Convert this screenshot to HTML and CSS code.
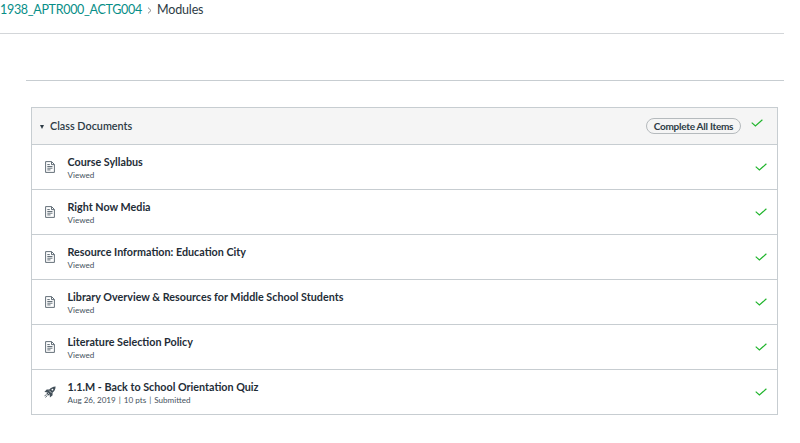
FILE: index.html
```html
<!DOCTYPE html>
<html lang="en">
<head>
<meta charset="utf-8">
<title>Modules</title>
<link rel="stylesheet" href="styles.css">
</head>
<body>
<svg class="defs" width="0" height="0">
  <symbol id="page" viewBox="0 0 10 12"><path d="M.6.6H6.6L9.4 3.4V11.4H.6ZM6.5.8V3.6H9.2M2.3 3.6H4.8M2.3 5.5H7.5M2.3 7.2H7.5M2.3 8.9H5.5" fill="none" stroke="currentColor" stroke-width=".9"/></symbol>
  <symbol id="rocket" viewBox="0 0 12 12"><path d="M11.6.4C8.7.5 6.9 1.6 5.3 3.5L2.7 3.4.4 6.1 3 6.2 2.5 7.4 4.6 9.5 5.8 9 5.9 11.6 8.6 9.3 8.5 6.7C10.4 5.1 11.5 3.3 11.6.4Z" fill="currentColor"/><circle cx="8.4" cy="3.6" r=".9" fill="#fff"/><path d="M3.6 6.5 5.5 8.4M5.2 4.6 7.4 6.8" stroke="#fff" stroke-width=".7"/><path d="M2.4 8.3.5 10.2M3.5 9.3 1.4 11.4" stroke="currentColor" stroke-width=".9"/></symbol>
  <symbol id="check" viewBox="0 0 12 8"><path d="M.7 3.6 4.4 7 11.4.7" fill="none" stroke="currentColor" stroke-width="1.15"/></symbol>
</svg>
<nav class="crumbs"><a class="course">1938_APTR000_ACTG004</a><svg class="sep" viewBox="0 0 5 7"><path d="M1 .6 4 3.5 1 6.4" fill="none" stroke="currentColor"/></svg><span class="current">Modules</span></nav>
<div class="toolbar"></div>
<main class="module">
  <header class="head"><span class="arrow"></span><h2>Class Documents</h2><span class="pill">Complete All Items</span><svg class="check"><use href="#check"/></svg></header>
  <div class="row"><svg class="page"><use href="#page"/></svg><div class="text"><h3>Course Syllabus</h3><p>Viewed</p></div><svg class="check"><use href="#check"/></svg></div>
  <div class="row"><svg class="page"><use href="#page"/></svg><div class="text"><h3>Right Now Media</h3><p>Viewed</p></div><svg class="check"><use href="#check"/></svg></div>
  <div class="row"><svg class="page"><use href="#page"/></svg><div class="text"><h3>Resource Information: Education City</h3><p>Viewed</p></div><svg class="check"><use href="#check"/></svg></div>
  <div class="row"><svg class="page"><use href="#page"/></svg><div class="text"><h3>Library Overview &amp; Resources for Middle School Students</h3><p>Viewed</p></div><svg class="check"><use href="#check"/></svg></div>
  <div class="row"><svg class="page"><use href="#page"/></svg><div class="text"><h3>Literature Selection Policy</h3><p>Viewed</p></div><svg class="check"><use href="#check"/></svg></div>
  <div class="row"><svg class="rocket"><use href="#rocket"/></svg><div class="text"><h3>1.1.M - Back to School Orientation Quiz</h3><p class="meta"><span>Aug 26, 2019</span><i>|</i><span>10 pts</span><i>|</i><span>Submitted</span></p></div><svg class="check"><use href="#check"/></svg></div>
</main>
</body>
</html>
```
FILE: styles.css
```css
* { box-sizing: border-box; }
body { margin: 0; background: #fff; color: #2d3b45; font-family: Lato, sans-serif; overflow: hidden; }
h2, h3, p { margin: 0; }
svg { flex: none; }
.defs { display: block; height: 0; }
.crumbs { display: flex; align-items: center; width: 784px; height: 34px; padding-bottom: 14px; border-bottom: 1px solid #d3d6d9; font-size: 12.5px; line-height: 19px; }
.course { width: 141px; color: #078e87; letter-spacing: -.3px; white-space: nowrap; }
.current { letter-spacing: -.15px; }
.sep { width: 5px; height: 7px; margin: 2px 5px 0 6px; color: #888; }
.toolbar { width: 758px; height: 47px; margin-left: 26px; border-bottom: 1px solid #c7cdd1; }
.module { width: 747px; margin: 26px 0 0 31px; border: 1px solid #c7cdd1; border-bottom: 0; }
.head { display: flex; align-items: center; height: 37px; padding: 0 14px 0 7px; background: #f5f5f5; border-bottom: 1px solid #c7cdd1; }
.arrow { width: 0; height: 0; margin: 2px 0 0 1px; border: 2.5px solid transparent; border-top: 4px solid #2d3b45; border-bottom: 0; }
.head h2 { flex: 1; margin-left: 6px; font-size: 10.8px; line-height: 16px; font-weight: 600; }
.pill { width: 95px; height: 16px; border: 1px solid #b5babd; border-radius: 8px; font-size: 10px; letter-spacing: -.26px; line-height: 15px; font-weight: 700; text-align: center; white-space: nowrap; }
.check { width: 12px; height: 8px; color: #20b52c; }
.head .check { margin: 0 0 6px 10px; }
.row { display: flex; align-items: center; height: 45px; padding: 0 10px 0 12.5px; border-bottom: 1px solid #c7cdd1; }
.page { width: 10px; height: 12px; margin-right: 13px; color: #52606a; }
.rocket { width: 12px; height: 12px; margin: 0 12px 0 -1px; color: #424f59; }
.text { flex: 1; }
.row h3 { color: #1f2d37; font-size: 10.75px; line-height: 15px; font-weight: 700; }
.row p { font-size: 8.1px; line-height: 12px; color: #46535d; }
.meta i { margin: 0 3px; font-style: normal; }
```
